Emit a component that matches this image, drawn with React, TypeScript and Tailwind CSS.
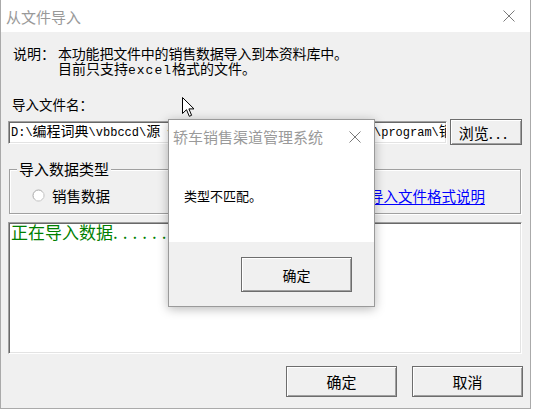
import React from "react";

const btn =
  "flex items-center justify-center bg-[#f0f0f0] border border-[#6d6d6d] shadow-[inset_1px_1px_0_#ffffff,inset_-1px_-1px_0_#a0a0a0] text-black";
const sunken =
  "bg-white border border-t-[#a0a0a0] border-l-[#a0a0a0] border-r-white border-b-white shadow-[inset_1px_1px_0_#696969,inset_-1px_-1px_0_#e3e3e3]";

function CloseIcon() {
  return (
    <svg width="12" height="12" viewBox="0 0 12 12" className="shrink-0">
      <path d="M0.5 0.5 L11.5 11.5 M11.5 0.5 L0.5 11.5" stroke="#7a7a7a" strokeWidth="1" fill="none" />
    </svg>
  );
}

function Radio() {
  return (
    <svg width="13" height="13" viewBox="0 0 13 13" className="shrink-0">
      <circle cx="6.5" cy="6.5" r="5.5" fill="#ffffff" stroke="#a8a8a8" strokeWidth="1" />
      <path d="M10.4 2.6 A5.5 5.5 0 0 1 2.6 10.4" stroke="#e8e8e8" strokeWidth="1" fill="none" />
    </svg>
  );
}

function Cursor() {
  return (
    <svg width="13" height="21" viewBox="0 0 13 21" className="absolute left-[182px] top-[97px]">
      <path
        d="M0.5 0.5 L0.5 16.5 L4.5 12.7 L7.3 19.3 L9.6 18.3 L6.9 11.9 L12 11.9 Z"
        fill="#ffffff"
        stroke="#000000"
        strokeWidth="1"
        strokeLinejoin="miter"
      />
    </svg>
  );
}

export default function App() {
  return (
    <div className="relative w-[533px] h-[413px] overflow-hidden bg-white font-[family-name:'Noto_Sans_CJK_SC','Noto_Sans',sans-serif] text-black">
      {/* main window */}
      <div className="flex flex-col w-[531px] h-[409px] border-x border-b border-[#aaaaaa]">
        {/* title bar */}
        <div className="flex items-center justify-between h-[32px] shrink-0 bg-white pl-[5px] pr-[15px]">
          <span className="text-[15px] leading-[15px] text-[#999999]">从文件导入</span>
          <CloseIcon />
        </div>
        {/* body */}
        <div className="flex flex-1 flex-col bg-[#f0f0f0] pl-[7px] pr-[8px]">
          <div className="flex pt-[14px] pl-[5px] text-[14px] leading-[15px]">
            <span className="w-[45px] shrink-0">说明：</span>
            <div>
              <div className="tracking-[-0.2px]">本功能把文件中的销售数据导入到本资料库中。</div>
              <div>
                目前只支持
                <span className="font-[family-name:'Liberation_Mono',monospace] text-[13px] tracking-[1px]">excel</span>
                格式的文件。
              </div>
            </div>
          </div>

          <div className="mt-[19px] pl-[4px] text-[13.5px] leading-[15px]">导入文件名：</div>

          <div className="mt-[7px] flex gap-[3px]">
            <div className={`${sunken} mt-[2px] flex h-[23px] w-[439px] items-center overflow-hidden pl-[2px] font-[family-name:'Liberation_Mono','Noto_Sans_CJK_SC',monospace] text-[12px] leading-[14px] whitespace-nowrap`}>
              <span className="w-[363px] shrink-0 overflow-hidden">
                D:\<span className="text-[14px]">编程词典</span>\vbbccd\<span className="text-[14px]">源</span> <span className="text-[14px]">代码</span>\11\
              </span>
              <span className="shrink-0">
                \program\<span className="text-[14px]">销售数据</span>.xls
              </span>
            </div>
            <div className={`${btn} h-[26px] w-[72px] text-[15px] leading-[15px]`}>
              <span className="pr-[3px]">
                浏览<span className="tracking-[3px]">...</span>
              </span>
            </div>
          </div>

          <fieldset className="mt-[17px] mx-[1px] border border-[#a0a0a0] pb-[8px] shadow-[inset_1px_1px_0_#ffffff,1px_1px_0_#ffffff]">
            <legend className="ml-[7px] bg-[#f0f0f0] px-[2px] text-[15px] leading-[14px]">导入数据类型</legend>
            <div className="mt-[9px] flex h-[20px] items-center">
              <div className="ml-[22px]">
                <Radio />
              </div>
              <span className="ml-[7px] text-[14.5px] leading-[15px]">销售数据</span>
              <span className="ml-auto mr-[35px] text-[14.5px] leading-[15px] text-[#0000ff] underline underline-offset-[2px]">
                导入文件格式说明
              </span>
            </div>
          </fieldset>

          <div className={`${sunken} mt-[8px] h-[132px] pl-[2px] text-[17px] leading-[17px] text-[#008000]`}>
            正在导入数据<span className="tracking-[5px]">......</span>
          </div>

          <div className="mt-[12px] mr-[-1px] flex justify-end gap-[15px]">
            <div className={`${btn} h-[31px] w-[111px] text-[15px] leading-[15px]`}>确定</div>
            <div className={`${btn} h-[31px] w-[111px] text-[15px] leading-[15px]`}>取消</div>
          </div>
        </div>
      </div>

      {/* message box */}
      <div className="absolute left-[168px] top-[119px] flex h-[188px] w-[207px] flex-col border border-[#9a9a9a] bg-white shadow-[0_2px_10px_rgba(0,0,0,0.28)]">
        <div className="h-[122px] shrink-0 bg-white">
          <div className="flex h-[33px] items-center justify-between pl-[4px] pr-[13px]">
            <span className="text-[15px] leading-[15px] text-[#9a9a9a]">轿车销售渠道管理系统</span>
            <CloseIcon />
          </div>
          <div className="mt-[35px] pl-[15px] text-[13px] leading-[15px]">类型不匹配。</div>
        </div>
        <div className="flex flex-1 items-start justify-end bg-[#f0f0f0] pt-[15px] pr-[22px]">
          <div className={`${btn} h-[35px] w-[111px] text-[14px] leading-[14px]`}>确定</div>
        </div>
      </div>

      <Cursor />
    </div>
  );
}
